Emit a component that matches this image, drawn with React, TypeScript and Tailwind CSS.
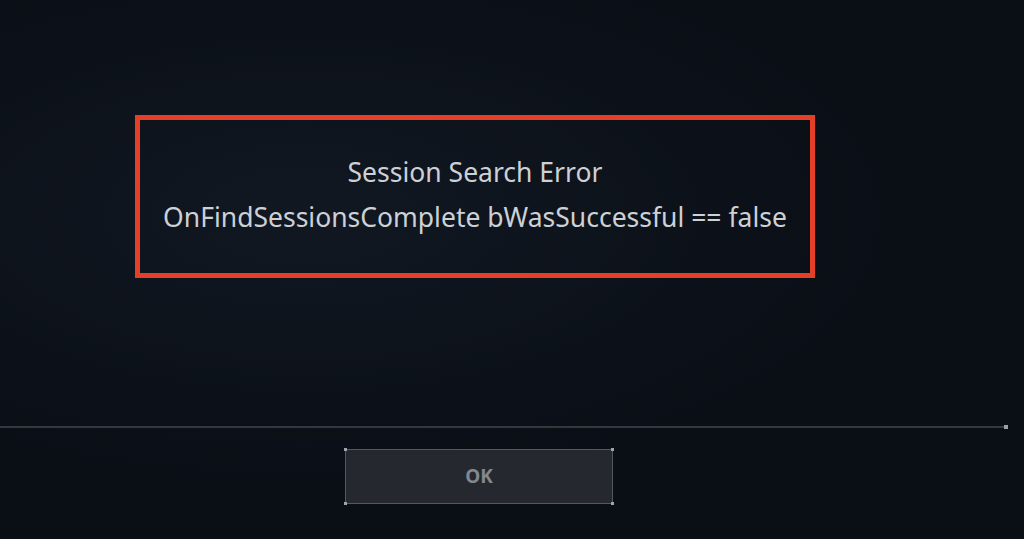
export default function App() {
  return (
    <div className="relative w-[1024px] h-[539px] overflow-hidden bg-[#0a0e15] font-['Noto_Sans',sans-serif]">
      {/* soft background glow */}
      <div className="absolute inset-0 bg-[radial-gradient(ellipse_at_30%_40%,#111822_0%,#0a0e15_60%)]" />

      <div className="relative flex flex-col h-full">
        <div className="pt-[115px] pl-[135px]">
          <div className="w-[680px] h-[163px] border-[5px] border-[#e63f28] flex flex-col items-center justify-center gap-[11px] pb-[4px] text-[#cdd0d5]">
            <div className="text-[26.5px] leading-[34px]">Session Search Error</div>
            <div className="text-[26.5px] leading-[34px]">OnFindSessionsComplete bWasSuccessful == false</div>
          </div>
        </div>

        <div className="mt-[147px] flex items-center w-[1008px]">
          <div className="flex-1 h-[2px] bg-[#33373e]" />
          <div className="w-[4px] h-[4px] bg-[#9a9ea5]" />
        </div>

        <div className="mt-[20px] pl-[345px]">
          <button className="relative w-[268px] h-[55px] bg-[#25282e] border border-[#55595f] flex items-center justify-center text-[19px] font-bold text-[#84888e]">
            OK
            <span className="absolute -left-[2px] -top-[2px] w-[3px] h-[3px] bg-[#a0a4aa]" />
            <span className="absolute -right-[2px] -top-[2px] w-[3px] h-[3px] bg-[#a0a4aa]" />
            <span className="absolute -left-[2px] -bottom-[2px] w-[3px] h-[3px] bg-[#a0a4aa]" />
            <span className="absolute -right-[2px] -bottom-[2px] w-[3px] h-[3px] bg-[#a0a4aa]" />
          </button>
        </div>
      </div>
    </div>
  );
}
